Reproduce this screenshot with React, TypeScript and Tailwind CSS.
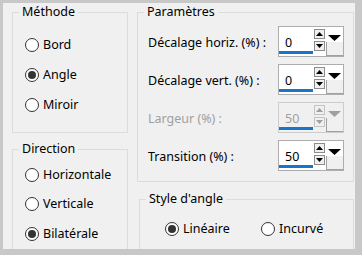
import React from 'react';

const font = { fontFamily: '"Noto Sans", "Open Sans", sans-serif' };

const Radio = ({ checked, label, h = 'h-[30px]' }: { checked?: boolean; label: string; h?: string }) => (
    <div className={`flex items-center gap-[4px] ${h}`}>
        <span className="w-[14px] h-[14px] rounded-full border border-[#333333] bg-white flex items-center justify-center shrink-0">
            {checked && <span className="w-[8px] h-[8px] rounded-full bg-[#333333]" />}
        </span>
        <span className="text-[12.5px] text-black leading-none">{label}</span>
    </div>
);

// group box: the title sits over the top border line
const Group = ({ title, className = '', children }: { title: string; className?: string; children?: React.ReactNode }) => (
    <div className={`relative border border-[#dcdcdc] shrink-0 ${className}`}>
        <span className="absolute left-[6px] top-[-9px] px-[3px] bg-[#f0f0f0] text-[12.5px] leading-[16px] text-black">
            {title}
        </span>
        {children}
    </div>
);

const Tri = ({ up, disabled }: { up?: boolean; disabled?: boolean }) => (
    <svg width="7" height="4" viewBox="0 0 7 4">
        <path d={up ? 'M0 4 L3.5 0 L7 4 Z' : 'M0 0 L3.5 4 L7 0 Z'} fill={disabled ? '#a0a0a0' : '#000'} />
    </svg>
);

const Spin = ({ value, disabled }: { value: string; disabled?: boolean }) => (
    <div className={`flex w-[66px] h-[31px] border ${disabled ? 'border-[#cccccc] bg-[#f0f0f0]' : 'border-[#adadad] bg-white'}`}>
        <div className="flex flex-col w-[35px]">
            <span className={`pl-[6px] pt-[8px] text-[12.5px] leading-[16px] ${disabled ? 'text-[#a0a0a0]' : 'text-black'}`}>{value}</span>
            <span className="mt-auto mb-[2px] h-[3px] w-[34px] bg-[#1a75c8]" />
        </div>
        <div className="flex flex-col gap-[2px] pt-[2px] w-[11px]">
            <span className={`h-[10px] border ${disabled ? 'border-[#c4c4c4]' : 'border-[#8c8c8c]'} bg-[#f0f0f0] flex items-center justify-center`}>
                <Tri up disabled={disabled} />
            </span>
            <span className={`h-[10px] border ${disabled ? 'border-[#c4c4c4]' : 'border-[#8c8c8c]'} bg-[#f0f0f0] flex items-center justify-center`}>
                <Tri disabled={disabled} />
            </span>
        </div>
        <div className="flex flex-col items-center w-[18px] pl-[1px]">
            <svg width="13" height="6" viewBox="0 0 13 6" className="mt-[8px]">
                <path d="M0 0 L6.5 6 L13 0 Z" fill={disabled ? '#a0a0a0' : '#000'} />
            </svg>
            <span className="mt-[1px] flex-1 w-full border-l border-b border-[#a0a0a0] bg-[#f0f0f0]" />
        </div>
    </div>
);

const Field = ({ label, value, disabled }: { label: string; value: string; disabled?: boolean }) => (
    <div className="flex items-center justify-between h-[31px]">
        <span className={`text-[12.5px] leading-none pt-[3px] ${disabled ? 'text-[#a0a0a0]' : 'text-black'}`}>{label}</span>
        <Spin value={value} disabled={disabled} />
    </div>
);

export default function App() {
    return (
        <div className="w-[362px] h-[255px] bg-[#c8c8c8] pt-[3px] pl-[3px] pr-[7px] pb-[6px]" style={font}>
            <div className="w-full h-full bg-[#f0f0f0] overflow-hidden flex pt-[9px] pl-[9px]">
                <div className="flex flex-col w-[116px] shrink-0">
                    <Group title="Méthode" className="h-[121px]">
                        <div className="flex flex-col mt-[17px] pl-[12px]">
                            <Radio label="Bord" />
                            <Radio label="Angle" checked />
                            <Radio label="Miroir" />
                        </div>
                    </Group>
                    <Group title="Direction" className="mt-[16px] h-[120px]">
                        <div className="flex flex-col mt-[10px] pl-[12px]">
                            <Radio label="Horizontale" h="h-[29.5px]" />
                            <Radio label="Verticale" h="h-[29.5px]" />
                            <Radio label="Bilatérale" h="h-[29.5px]" checked />
                        </div>
                    </Group>
                </div>
                <div className="flex flex-col ml-[9px] w-[217px] shrink-0">
                    <Group title="Paramètres" className="h-[170px]">
                        <div className="flex flex-col gap-[7px] mt-[13px] pl-[10px] pr-[9px]">
                            <Field label="Décalage horiz. (%) :" value="0" />
                            <Field label="Décalage vert. (%) :" value="0" />
                            <Field label="Largeur (%) :" value="50" disabled />
                            <Field label="Transition (%) :" value="50" />
                        </div>
                    </Group>
                    <Group title="Style d'angle" className="mt-[17px] ml-[2px] h-[80px]">
                        <div className="flex items-center mt-[14px] pl-[25px]">
                            <div className="w-[96px]">
                                <Radio label="Linéaire" checked />
                            </div>
                            <Radio label="Incurvé" />
                        </div>
                    </Group>
                </div>
            </div>
        </div>
    );
}
